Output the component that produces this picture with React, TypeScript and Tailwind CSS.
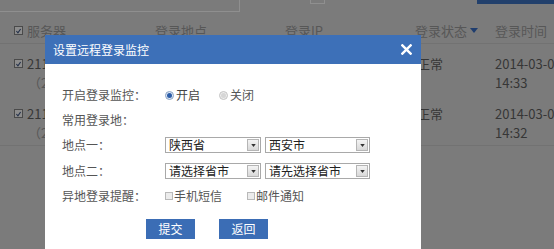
import { ReactNode } from 'react';

const font = { fontFamily: '"Noto Sans CJK SC", "Noto Sans", sans-serif' };

function DimCheck() {
  return (
    <span className="inline-flex h-[9px] w-[9px] shrink-0 items-center justify-center border border-[#4a4a4a] bg-[#8c8c8c]">
      <svg viewBox="0 0 10 10" className="h-[8px] w-[8px]">
        <path d="M2 5 L4.2 7.5 L8 2.2" fill="none" stroke="#23304a" strokeWidth="1.6" />
      </svg>
    </span>
  );
}

function Select({ value, width }: { value: string; width: string }) {
  return (
    <div className={`flex h-[16px] items-center justify-between border border-[#a9a9a9] bg-white pl-[3px] pr-[1px] ${width}`}>
      <span className="text-[12px] leading-none text-[#222]">{value}</span>
      <span className="flex h-[12px] w-[12px] items-center justify-center border border-[#b5b5b5] bg-gradient-to-b from-[#f4f4f4] to-[#d8d8d8]">
        <svg viewBox="0 0 6 4" className="h-[3px] w-[5px]">
          <path d="M0 0 L6 0 L3 4 Z" fill="#333" />
        </svg>
      </span>
    </div>
  );
}

function Radio({ on }: { on?: boolean }) {
  return (
    <span
      className={`inline-flex h-[9px] w-[9px] items-center justify-center rounded-full border ${
        on ? 'border-[#8aa2c4] bg-[#dfe8f4]' : 'border-[#c4c4c4] bg-[#ededed]'
      }`}
    >
      {on ? <span className="h-[5px] w-[5px] rounded-full bg-[#2c5da8]" /> : <span className="h-[5px] w-[5px] rounded-full bg-[#d6d6d6]" />}
    </span>
  );
}

function Box() {
  return <span className="inline-block h-[8px] w-[8px] border border-[#b9b9b9] bg-[#ececec]" />;
}

function Row({ label, h, children }: { label: string; h: string; children?: ReactNode }) {
  return (
    <div className={`flex items-center ${h}`}>
      <span className="w-[103px] text-[12px] text-[#555]">{label}</span>
      {children}
    </div>
  );
}

export default function App() {
  return (
    <div className="relative h-[249px] w-[554px] overflow-hidden bg-[#7b7b7b]" style={font}>
      {/* dimmed page behind the dialog */}
      <div className="flex h-[12px] items-start">
        <div className="h-[12px] w-[240px] border border-t-0 border-l-0 border-[#8f8f8f]" />
        <div className="ml-[70px] h-[4px] w-[15px] border border-t-0 border-[#8f8f8f]" />
        <div className="ml-auto h-[4px] w-[77px] bg-[#22406c]" />
      </div>
      <div className="mt-[6px] grid h-[26px] grid-cols-[155px_130px_130px_80px_1fr] items-center border-b border-[#727272] text-[13px] text-[#575757]">
        <div className="flex items-center gap-[4px] pl-[14px]">
          <DimCheck />
          <span>服务器</span>
        </div>
        <span>登录地点</span>
        <span>登录IP</span>
        <span className="flex items-center gap-[3px]">
          登录状态
          <svg viewBox="0 0 8 5" className="h-[5px] w-[8px]">
            <path d="M0 0 L8 0 L4 5 Z" fill="#1f3d6e" />
          </svg>
        </span>
        <span>登录时间</span>
      </div>
      {[
        { t: '14:33', pt: 'pt-[10px] pb-[2px]' },
        { t: '14:32', pt: 'pt-[10px] pb-[3px]' },
      ].map((r) => (
        <div key={r.t} className={`grid grid-cols-[155px_130px_130px_80px_1fr] text-[13px] leading-[19px] text-[#363636] ${r.pt}`}>
          <div className="pl-[14px]">
            <div className="flex items-center gap-[4px]">
              <DimCheck />
              <span>211.100.10.1</span>
            </div>
            <div className="pl-[14px] text-[#575757]">（222.90.1.1）</div>
          </div>
          <span>陕西省西安市</span>
          <span>222.90.1.1</span>
          <span className="pl-[2px]">正常</span>
          <div>
            <div className="whitespace-nowrap">2014-03-04</div>
            <div>{r.t}</div>
          </div>
        </div>
      ))}
      <div className="border-b border-[#727272]" />

      {/* dialog */}
      <div className="absolute left-[45px] top-[35px] flex h-[230px] w-[376px] flex-col bg-white">
        <div className="flex h-[29px] items-center justify-between bg-[#3d70b8] pl-[8px] pr-[9px] text-[12px] text-white">
          <span>设置远程登录监控</span>
          <svg viewBox="0 0 12 12" className="h-[11px] w-[11px]">
            <path d="M1.5 1.5 L10.5 10.5 M10.5 1.5 L1.5 10.5" stroke="white" strokeWidth="2.6" strokeLinecap="square" />
          </svg>
        </div>
        <div className="flex flex-col pl-[17px] pt-[19px]">
          <Row label="开启登录监控：" h="h-[24px]">
            <label className="flex items-center gap-[2px] text-[12px] text-[#444]">
              <Radio on />
              开启
            </label>
            <label className="ml-[19px] flex items-center gap-[2px] text-[12px] text-[#555]">
              <Radio />
              关闭
            </label>
          </Row>
          <Row label="常用登录地：" h="h-[25px]" />
          <Row label="地点一：" h="h-[26px]">
            <Select value="陕西省" width="w-[96px]" />
            <div className="w-[4px]" />
            <Select value="西安市" width="w-[105px]" />
          </Row>
          <Row label="地点二：" h="h-[26px]">
            <Select value="请选择省市" width="w-[96px]" />
            <div className="w-[4px]" />
            <Select value="请先选择省市" width="w-[105px]" />
          </Row>
          <Row label="异地登录提醒：" h="h-[23px]">
            <label className="flex items-center gap-[1px] text-[12px] text-[#555]">
              <Box />
              手机短信
            </label>
            <label className="ml-[25px] flex items-center gap-[1px] text-[12px] text-[#555]">
              <Box />
              邮件通知
            </label>
          </Row>
          <div className="mt-[12px] flex gap-[24px] pl-[84px]">
            <button className="h-[20px] w-[49px] bg-[#3b6db5] text-[12px] text-white">提交</button>
            <button className="h-[20px] w-[49px] bg-[#3b6db5] text-[12px] text-white">返回</button>
          </div>
        </div>
      </div>
    </div>
  );
}
